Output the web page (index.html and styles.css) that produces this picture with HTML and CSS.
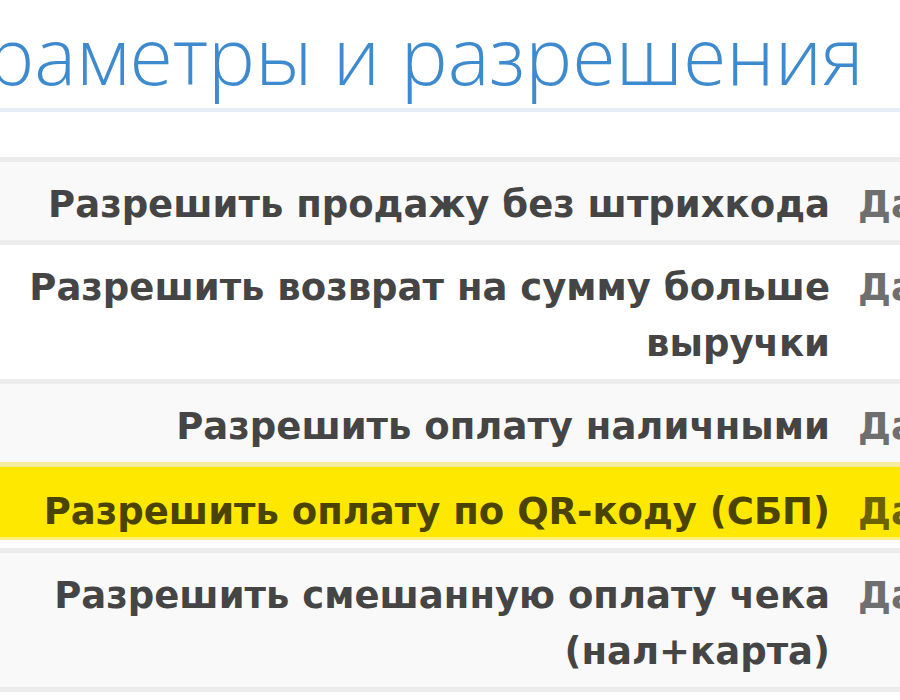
FILE: index.html
```html
<!DOCTYPE html>
<html lang="ru">
<head>
<meta charset="utf-8">
<title>Параметры и разрешения</title>
<link rel="stylesheet" href="styles.css">
</head>
<body>
<div class="page">
  <h1 class="title">Параметры и разрешения</h1>
  <div class="settings">
    <div class="row odd">
      <div class="label">Разрешить продажу без штрихкода</div>
      <div class="value">Да</div>
    </div>
    <div class="row">
      <div class="label">Разрешить возврат на сумму больше выручки</div>
      <div class="value">Да</div>
    </div>
    <div class="row odd">
      <div class="label">Разрешить оплату наличными</div>
      <div class="value">Да</div>
    </div>
    <div class="row marked">
      <div class="label">Разрешить оплату по QR-коду (СБП)</div>
      <div class="value">Да</div>
    </div>
    <div class="row odd">
      <div class="label">Разрешить смешанную оплату чека (нал+карта)</div>
      <div class="value">Да</div>
    </div>
    <div class="row">
      <div class="label">Разрешить частичную оплату</div>
      <div class="value">Да</div>
    </div>
  </div>
</div>
</body>
</html>
```

FILE: styles.css
```css
html, body {
  margin: 0;
  padding: 0;
  background: #ffffff;
  overflow: hidden;
}

.page {
  margin-left: -46px;
  width: 1100px;
}

.title {
  margin: 0;
  padding: 11px 0 9px 0;
  text-indent: -65px;
  font-family: "Open Sans", "Segoe UI", sans-serif;
  font-weight: 300;
  font-size: 79px;
  line-height: 88px;
  white-space: nowrap;
  color: #3d8ace;
  border-bottom: 4px solid #e5eef6;
}

.settings {
  margin-top: 45px;
  display: flex;
  flex-direction: column;
}

.row {
  display: grid;
  grid-template-columns: 890px 1fr;
  border-top: 5px solid #ececec;
  background: #ffffff;
  font-family: "DejaVu Sans", Verdana, sans-serif;
  font-weight: bold;
  font-size: 37px;
  line-height: 56px;
  color: #454545;
}

.row.odd {
  background: #f9f9f9;
}

/* highlighted row: yellow band with a pale rim and a white gap below */
.row.marked {
  background: #ffe800;
  border-top-color: #f4ec9e;
  border-bottom: 8px solid #ffffff;
  box-shadow: inset 0 -3px 0 #fdf07a;
  color: #4a4400;
}

.row.marked .label,
.row.marked .value {
  padding-top: 17px;
  padding-bottom: 0;
}

.label {
  padding: 15px 14px 7px 66px;
  text-align: right;
}

.value {
  padding: 15px 14px 7px 14px;
  color: #6f6f6f;
}

.row.marked .value {
  color: #6b6200;
}
```
